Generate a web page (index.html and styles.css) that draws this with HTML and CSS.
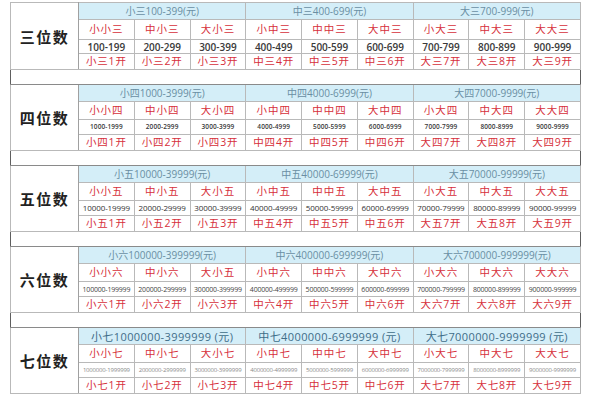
FILE: index.html
```html
<!DOCTYPE html>
<html lang="zh">
<head>
<meta charset="utf-8">
<title>位数表</title>
<link rel="stylesheet" href="styles.css">
</head>
<body>
<table class="grid">
  <colgroup><col class="c-label"><col><col><col><col><col><col><col><col><col></colgroup>
  <tbody class="sec s1">
    <tr class="hd"><td class="label" rowspan="4">三位数</td><td colspan="3">小三100-399(元)</td><td colspan="3">中三400-699(元)</td><td colspan="3">大三700-999(元)</td></tr>
    <tr class="nm"><td>小小三</td><td>中小三</td><td>大小三</td><td>小中三</td><td>中中三</td><td>大中三</td><td>小大三</td><td>中大三</td><td>大大三</td></tr>
    <tr class="rg"><td>100-199</td><td>200-299</td><td>300-399</td><td>400-499</td><td>500-599</td><td>600-699</td><td>700-799</td><td>800-899</td><td>900-999</td></tr>
    <tr class="kai"><td>小三1开</td><td>小三2开</td><td>小三3开</td><td>中三4开</td><td>中三5开</td><td>中三6开</td><td>大三7开</td><td>大三8开</td><td>大三9开</td></tr>
    <tr class="gap"><td colspan="10"></td></tr>
  </tbody>
  <tbody class="sec s2">
    <tr class="hd"><td class="label" rowspan="4">四位数</td><td colspan="3">小四1000-3999(元)</td><td colspan="3">中四4000-6999(元)</td><td colspan="3">大四7000-9999(元)</td></tr>
    <tr class="nm"><td>小小四</td><td>中小四</td><td>大小四</td><td>小中四</td><td>中中四</td><td>大中四</td><td>小大四</td><td>中大四</td><td>大大四</td></tr>
    <tr class="rg"><td>1000-1999</td><td>2000-2999</td><td>3000-3999</td><td>4000-4999</td><td>5000-5999</td><td>6000-6999</td><td>7000-7999</td><td>8000-8999</td><td>9000-9999</td></tr>
    <tr class="kai"><td>小四1开</td><td>小四2开</td><td>小四3开</td><td>中四4开</td><td>中四5开</td><td>中四6开</td><td>大四7开</td><td>大四8开</td><td>大四9开</td></tr>
    <tr class="gap"><td colspan="10"></td></tr>
  </tbody>
  <tbody class="sec s3">
    <tr class="hd"><td class="label" rowspan="4">五位数</td><td colspan="3">小五10000-39999(元)</td><td colspan="3">中五40000-69999(元)</td><td colspan="3">大五70000-99999(元)</td></tr>
    <tr class="nm"><td>小小五</td><td>中小五</td><td>大小五</td><td>小中五</td><td>中中五</td><td>大中五</td><td>小大五</td><td>中大五</td><td>大大五</td></tr>
    <tr class="rg"><td>10000-19999</td><td>20000-29999</td><td>30000-39999</td><td>40000-49999</td><td>50000-59999</td><td>60000-69999</td><td>70000-79999</td><td>80000-89999</td><td>90000-99999</td></tr>
    <tr class="kai"><td>小五1开</td><td>小五2开</td><td>小五3开</td><td>中五4开</td><td>中五5开</td><td>中五6开</td><td>大五7开</td><td>大五8开</td><td>大五9开</td></tr>
    <tr class="gap"><td colspan="10"></td></tr>
  </tbody>
  <tbody class="sec s4">
    <tr class="hd"><td class="label" rowspan="4">六位数</td><td colspan="3">小六100000-399999(元)</td><td colspan="3">中六400000-699999(元)</td><td colspan="3">大六700000-999999(元)</td></tr>
    <tr class="nm"><td>小小六</td><td>中小六</td><td>大小五</td><td>小中六</td><td>中中六</td><td>大中六</td><td>小大六</td><td>中大六</td><td>大大六</td></tr>
    <tr class="rg"><td>100000-199999</td><td>200000-299999</td><td>300000-399999</td><td>400000-499999</td><td>500000-599999</td><td>600000-699999</td><td>700000-799999</td><td>800000-899999</td><td>900000-999999</td></tr>
    <tr class="kai"><td>小六1开</td><td>小六2开</td><td>小六3开</td><td>中六4开</td><td>中六5开</td><td>中六6开</td><td>大六7开</td><td>大六8开</td><td>大六9开</td></tr>
    <tr class="gap"><td colspan="10"></td></tr>
  </tbody>
  <tbody class="sec s5">
    <tr class="hd"><td class="label" rowspan="4">七位数</td><td colspan="3">小七1000000-3999999 (元)</td><td colspan="3">中七4000000-6999999 (元)</td><td colspan="3">大七7000000-9999999 (元)</td></tr>
    <tr class="nm"><td>小小七</td><td>中小七</td><td>大小七</td><td>小中七</td><td>中中七</td><td>大中七</td><td>小大七</td><td>中大七</td><td>大大七</td></tr>
    <tr class="rg"><td>1000000-1999999</td><td>2000000-2999999</td><td>3000000-3999999</td><td>4000000-4999999</td><td>5000000-5999999</td><td>6000000-6999999</td><td>7000000-7999999</td><td>8000000-8999999</td><td>9000000-9999999</td></tr>
    <tr class="kai"><td>小七1开</td><td>小七2开</td><td>小七3开</td><td>中七4开</td><td>中七5开</td><td>中七6开</td><td>大七7开</td><td>大七8开</td><td>大七9开</td></tr>
  </tbody>
</table>
</body>
</html>
```
FILE: styles.css
```css
html, body {
  margin: 0;
  padding: 0;
  background: #ffffff;
}

body {
  font-family: "Open Sans", "Noto Sans CJK SC", sans-serif;
}

.grid {
  margin: 2px 0 0 10px;
  width: 571px;
  table-layout: fixed;
  border-collapse: collapse;
  border: 1px solid #5e5e5e;
}

.c-label {
  width: 68px;
}

.grid td {
  padding: 0;
  border: 1px solid #b9b9b9;
  text-align: center;
  vertical-align: middle;
  line-height: 1;
  white-space: nowrap;
  overflow: hidden;
}

.grid td.label {
  font-family: "Noto Sans CJK SC", sans-serif;
  font-weight: 700;
  font-size: 15px;
  letter-spacing: 1.5px;
  color: #222222;
  background: #ffffff;
  border-right-color: #a0a0a0;
}

.hd td {
  height: 16px;
  background: #d4eef8;
  color: #6a8ea3;
  font-size: 10px;
}

.hd td.label {
  background: #ffffff;
}

.nm td {
  height: 17px;
  color: #d6303b;
  font-size: 10.5px;
  letter-spacing: 1px;
}

.rg td {
  height: 14px;
  color: #3a3a3a;
  font-weight: 600;
}

.kai td {
  height: 15px;
  color: #d6303b;
  font-size: 10.5px;
  letter-spacing: 0.8px;
}

.gap td {
  height: 14px;
  border-left: none;
  border-right: none;
  border-top: 1px solid #b0b0b0;
  border-bottom: 1px solid #8a8a8a;
}

.s1 .nm td { height: 19px; }
.s1 .rg td { font-size: 10px; height: 13px; }
.s2 .rg td { font-size: 6.5px; letter-spacing: 0.1px; }
.s3 .rg td { font-size: 8px; font-weight: 400; letter-spacing: -0.1px; color: #333333; }
.s4 .rg td { font-size: 7px; font-weight: 400; letter-spacing: -0.2px; color: #444444; }
.s5 .rg td { font-size: 6px; font-weight: 400; letter-spacing: -0.2px; color: #8a8a8a; }

.s5 .hd td {
  font-size: 11px;
  letter-spacing: 0.4px;
  color: #3f6d88;
}
.s5 .hd td.label { color: #222222; font-size: 15px; letter-spacing: 1.5px; }
```
